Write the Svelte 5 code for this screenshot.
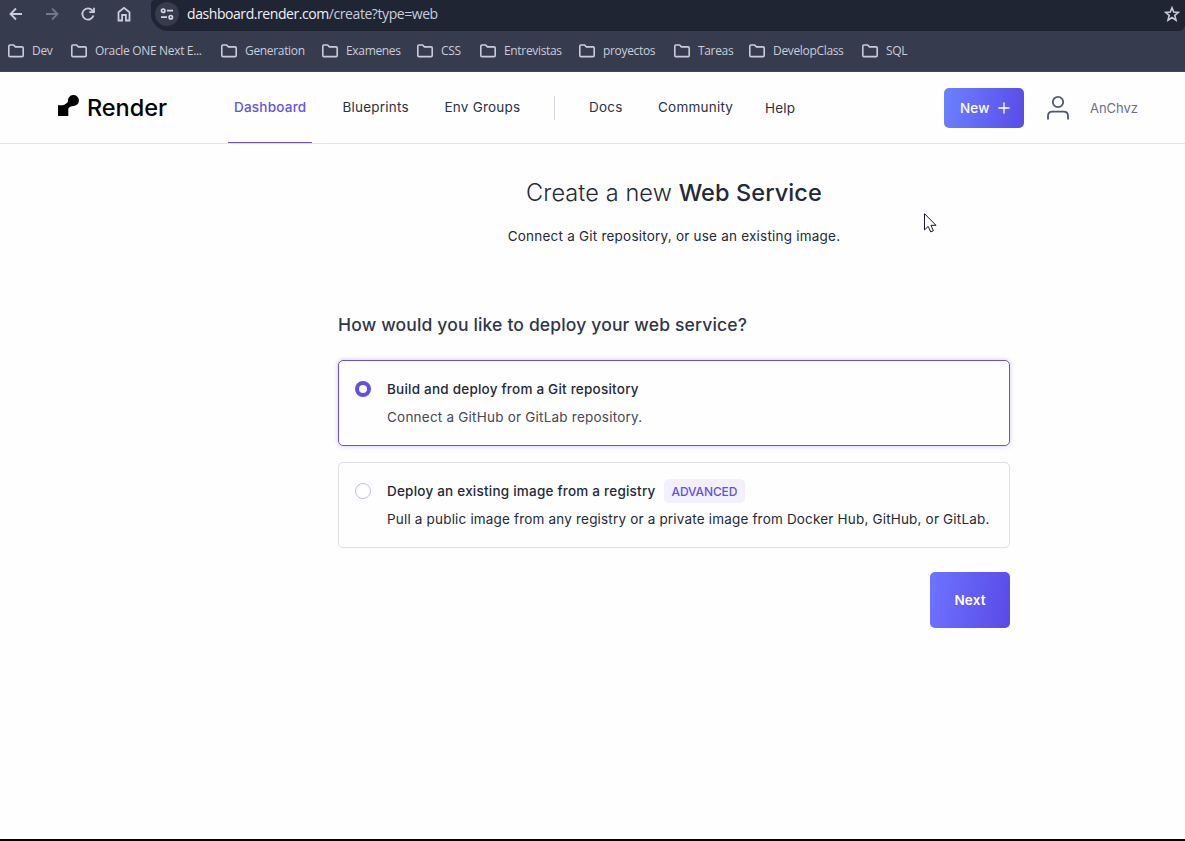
<script>
  const bookmarks = [
    { name: 'Dev', width: 63 },
    { name: 'Oracle ONE Next E...', width: 150 },
    { name: 'Generation', width: 101 },
    { name: 'Examenes', width: 95 },
    { name: 'CSS', width: 63 },
    { name: 'Entrevistas', width: 99 },
    { name: 'proyectos', width: 95 },
    { name: 'Tareas', width: 75 },
    { name: 'DevelopClass', width: 113 },
    { name: 'SQL', width: 60 }
  ];
  let selected = $state('git');
</script>

<div class="window">
  <div class="browser">
    <div class="toolbar">
      <div class="controls">
        <svg width="16" height="16" viewBox="0 0 16 16"><path d="M14 8H3M8 2.5 2.5 8 8 13.5" /></svg>
        <svg class="dim" width="16" height="16" viewBox="0 0 16 16"><path d="M2 8h11M8 2.5 13.5 8 8 13.5" /></svg>
        <svg width="16" height="16" viewBox="0 0 16 16"><path d="M13.4 9.4A5.6 5.6 0 1 1 12.3 4.4L13.5 5.7" /><path d="M14 1.8v4.4H9.3" /></svg>
        <svg width="16" height="16" viewBox="0 0 16 16"><path d="M2.5 6.2 8 1.8l5.5 4.400v8.300H9.900V9H6.100v5.500H2.500z" /></svg>
      </div>
      <div class="address">
        <span class="site">
          <svg width="14" height="14" viewBox="0 0 14 14"><circle cx="3.2" cy="3.7" r="1.7" /><path d="M7 3.7h6M1 10.2h6" /><circle cx="10.8" cy="10.2" r="1.7" /></svg>
        </span>
        <span class="url"><b>dashboard.render.com</b>/create?type=web</span>
        <svg class="star" width="16" height="16" viewBox="0 0 16 16"><path d="m8 1.8 1.7 4.3 4.7.3-3.6 3 1.2 4.7L8 11.5l-4 2.6 1.2-4.7-3.6-3 4.7-.3z" /></svg>
      </div>
    </div>
    <div class="bookmarks">
      {#each bookmarks as bookmark}
        <div class="bookmark" style:width="{bookmark.width}px">
          <svg width="16" height="14" viewBox="0 0 16 14"><path d="M.8 2.3Q.8 1 2 1h3.600l1.800 1.900H14q1.200 0 1.200 1.200v7.300q0 1.200-1.200 1.200H2q-1.200 0-1.200-1.200z" /></svg>
          <span>{bookmark.name}</span>
        </div>
      {/each}
    </div>
  </div>

  <header>
    <div class="logo">
      <svg width="21" height="21" viewBox="0 0 21 21"><path d="M0 10.2h4.4Q8.7 9.2 10 6.4A5.5 5.5 0 1 1 15 11Q11.5 11 10.3 13.5V21H0z" /></svg>
      <span>Render</span>
    </div>
    <nav>
      <a class="dashboard active" href="#dashboard">Dashboard</a>
      <a class="blueprints" href="#blueprints">Blueprints</a>
      <a class="groups" href="#groups">Env Groups</a>
      <i class="divider"></i>
      <a class="docs" href="#docs">Docs</a>
      <a class="community" href="#community">Community</a>
      <a class="help" href="#help">Help</a>
    </nav>
    <div class="account">
      <button class="new">New <svg width="12" height="12" viewBox="0 0 12 12"><path d="M6 .5v11M.5 6h11" /></svg></button>
      <svg class="user" width="24" height="26" viewBox="0 0 24 26"><circle cx="12" cy="7" r="5.2" /><path d="M2 24.5V21q0-4.4 4.4-4.4h11.200Q22 16.600 22 21v3.500" /></svg>
      <span class="username">AnChvz</span>
    </div>
  </header>

  <main>
    <h1>Create a new <strong>Web Service</strong></h1>
    <p class="subtitle">Connect a Git repository, or use an existing image.</p>
    <h2>How would you like to deploy your web service?</h2>
    <label class="option" class:selected={selected === 'git'}>
      <input type="radio" bind:group={selected} value="git" />
      <div>
        <div class="heading"><span>Build and deploy from a Git repository</span></div>
        <p class="gitdesc">Connect a GitHub or GitLab repository.</p>
      </div>
    </label>
    <label class="option" class:selected={selected === 'image'}>
      <input type="radio" bind:group={selected} value="image" />
      <div>
        <div class="heading"><span>Deploy an existing image from a registry</span><span class="tag">ADVANCED</span></div>
        <p class="imgdesc">Pull a public image from any registry or a private image from Docker Hub, GitHub, or GitLab.</p>
      </div>
    </label>
    <button class="next">Next</button>
  </main>

  <svg class="cursor" width="13" height="20" viewBox="0 0 13 20"><path d="M.5.7v16.200l3.700-3.500 2.500 5.500 2.700-1.200-2.500-5.400h5.100z" /></svg>
</div>

<style>
  :global(body) { margin: 0; }
  .window {
    position: relative;
    box-sizing: border-box;
    height: 841px;
    overflow: hidden;
    display: flex;
    flex-direction: column;
    background: #fefefe;
    border-bottom: 2px solid #000;
    font-family: Inter, "Liberation Sans", sans-serif;
    color: #242938;
    font-size: 13.5px;
    letter-spacing: 0.22px;
  }
  svg { display: block; flex: none; fill: none; stroke: currentColor; }
  .browser {
    box-sizing: border-box;
    height: 72px;
    background: #363b4e;
    border-bottom: 1px solid #454653;
    color: #c9cddb;
    font-family: "Open Sans", "Noto Sans", sans-serif;
  }
  .toolbar { display: flex; height: 31px; }
  .controls { display: flex; gap: 20px; width: 151px; padding: 6px 0 0 8px; box-sizing: border-box; }
  .controls svg { stroke-width: 1.8; }
  .controls .dim { color: #737889; }
  .address {
    flex: 1;
    display: flex;
    align-items: center;
    height: 31px;
    padding: 0 5px 3px 4px;
    box-sizing: border-box;
    background: #1f2533;
    border-radius: 4px 0 6px 17px;
  }
  .site {
    display: grid;
    place-items: center;
    width: 24px;
    height: 24px;
    border-radius: 50%;
    background: #363b4e;
  }
  .site svg { stroke-width: 1.7; color: #d5d8e3; }
  .url { flex: 1; margin: -1px 0 0 8px; font-size: 14px; letter-spacing: -0.43px; white-space: nowrap; }
  .url b { font-weight: 400; color: #f0f1f6; }
  .star { stroke-width: 1.6; }
  .bookmarks { display: flex; height: 40px; padding-left: 8px; align-items: center; }
  .bookmark { display: flex; flex: none; gap: 8px; align-items: center; font-size: 12px; letter-spacing: -0.33px; white-space: nowrap; }
  .bookmark svg { stroke-width: 1.6; }
  .bookmark span { margin-top: -1px; }

  header {
    display: flex;
    flex: none;
    align-items: center;
    box-sizing: border-box;
    height: 72px;
    padding: 0 48px 0 58px;
    border-bottom: 1px solid #e2e3ed;
  }
  .logo { display: flex; gap: 8px; width: 170px; color: #000; font-size: 23.5px; font-weight: 500; letter-spacing: -0.05px; line-height: 24px; }
  .logo svg { fill: #000; stroke: none; margin-top: -1px; }
  nav { display: flex; align-items: center; align-self: stretch; flex: 1; }
  nav a { flex: none; padding-bottom: 1px; line-height: 20px; color: #2b3142; text-decoration: none; white-space: nowrap; }
  nav .active {
    box-sizing: border-box;
    width: 84px;
    height: 71px;
    margin-right: 30.5px;
    padding: 25px 0 0 6px;
    border-bottom: 1px solid #644ee5;
    color: #6253ed;
    font-weight: 500;
  }
  .blueprints { width: 102px; }
  .groups { width: 109.5px; }
  .divider { width: 1px; height: 24px; background: #d3d6e5; margin-right: 34px; }
  .docs { width: 69px; }
  .community { width: 107px; }
  nav .help { padding: 1px 0 0; }
  .account { display: flex; align-items: center; }
  button { border: 0; border-radius: 5px; color: #fff; font: 500 13.5px Inter, sans-serif; letter-spacing: 0.15px; }
  .new {
    display: flex;
    align-items: center;
    gap: 8px;
    width: 80px;
    height: 40px;
    padding: 0 0 0 16px;
    background: linear-gradient(100deg, #6c82ff, #5a4ae8);
  }
  .new svg { stroke-width: 1.4; }
  .user { margin-left: 22px; stroke-width: 1.8; color: #4e5872; }
  .username { width: 47px; margin-left: 20px; font-size: 13px; letter-spacing: -0.05px; color: #6b7086; white-space: nowrap; }

  main { display: flex; flex-direction: column; width: 672px; margin-left: 338px; }
  h1, h2, p { margin: 0; white-space: nowrap; }
  h1 { margin-top: 33px; text-align: center; font-size: 23.5px; line-height: 32px; font-weight: 350; letter-spacing: 0.1px; }
  h1 strong { font-weight: 500; }
  .subtitle { margin-top: 16px; line-height: 22px; text-align: center; }
  h2 { margin-top: 65px; font-size: 17.5px; line-height: 26px; font-weight: 500; letter-spacing: 0.16px; color: #303649; }
  .option {
    display: flex;
    box-sizing: border-box;
    height: 86px;
    padding: 16px;
    border: 1px solid #dfe0e6;
    border-radius: 5px;
  }
  h2 + .option { margin: 22px 0 16px; }
  .option.selected { border-color: #6550ec; box-shadow: 0 0 5px #a79dff88; }
  input {
    appearance: none;
    box-sizing: border-box;
    flex: none;
    width: 16px;
    height: 16px;
    margin: 4px 16px 0 0;
    border: 1px solid #bfc1d5;
    border-radius: 50%;
    background: #fff;
  }
  input:checked { border: 4px solid #6050ea; }
  .heading { display: flex; gap: 8px; align-items: center; height: 24px; font-weight: 500; white-space: nowrap; }
  .heading span:first-child { margin-top: -1px; }
  .option p { margin-top: 4px; line-height: 24px; }
  .gitdesc { color: #444954; }
  .imgdesc { letter-spacing: 0.18px; }
  .tag { padding: 0 8px; height: 24px; line-height: 25px; border-radius: 5px; background: #f2f0fe; color: #6250ea; font-size: 12px; letter-spacing: -0.12px; }
  .next {
    align-self: flex-end;
    width: 80px;
    height: 56px;
    margin-top: 24px;
    background: linear-gradient(100deg, #6d74ff, #5a49e7);
    font-weight: 600;
  }
  .cursor { position: absolute; left: 924px; top: 213px; fill: #fff; stroke: #151927; }
</style>
